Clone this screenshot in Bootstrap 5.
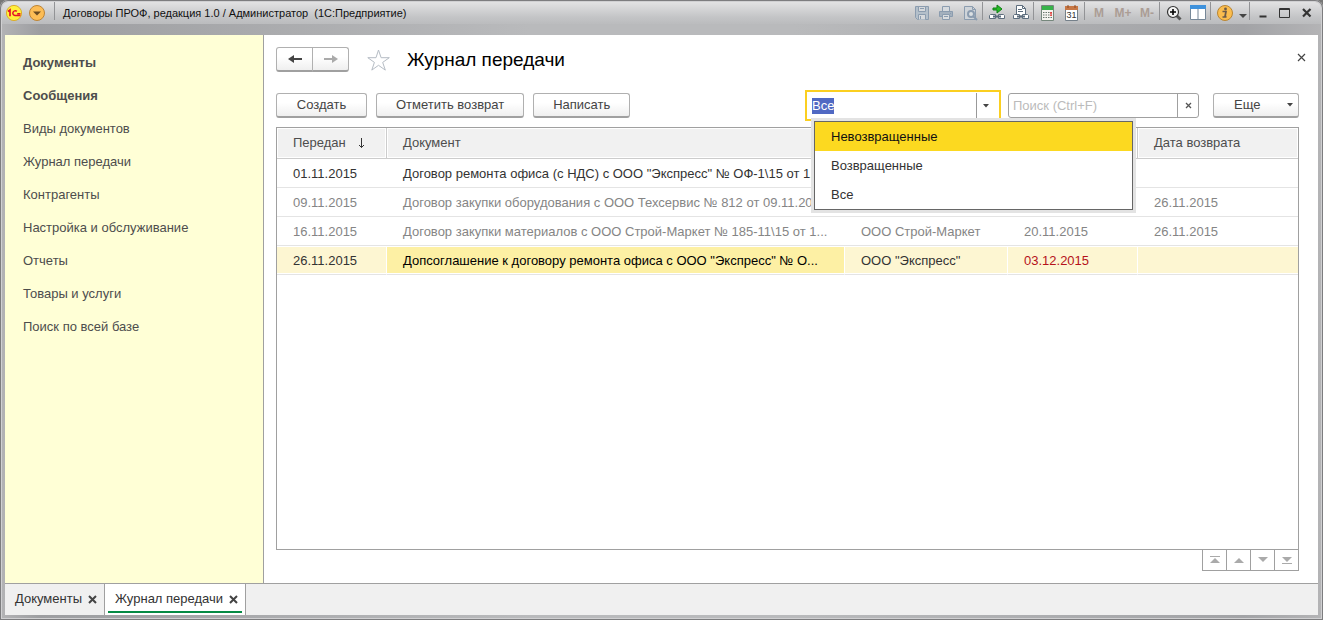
<!DOCTYPE html>
<html lang="ru">
<head>
<meta charset="utf-8">
<meta name="viewport" content="width=device-width, initial-scale=1">
<title>Договоры ПРОФ, редакция 1.0</title>
<link href="https://cdn.jsdelivr.net/npm/bootstrap@5.3.0/dist/css/bootstrap.min.css" rel="stylesheet">
<style>
  body { font-family: "Liberation Sans", Arial, sans-serif; font-size: 13px; line-height: 16px; color: #333; background: #777; }
  button { font: inherit; color: inherit; }
  a { color: inherit; text-decoration: none; }
  .app-window { min-height: 100vh; padding: 0 5px 5px; border-radius: 8px 8px 0 0; background: linear-gradient(90deg, #b4b4b6, #9d9ea1 3%, #b9babc 40%, #b9babc 60%, #a2a3a6 94%, #b4b4b6); box-shadow: inset 0 0 0 1px #7d7d7f, inset 0 0 0 2px #d0d0d2; }
  .title-bar { height: 22px; margin: 2px -3px 0; padding: 0 3px 0 4px; border-radius: 6px 6px 0 0; background: linear-gradient(#e2e2e3, #c3c4c6 70%, #bbbcbe); }
  .title-gap { height: 11px; }
  .title-text { font-size: 11px; color: #111; white-space: pre; margin-left: 6px; }
  .tool { width: 24px; height: 22px; padding: 0; border: 0; background: none; display: flex; align-items: center; justify-content: center; flex: none; }
  .tool-win { width: 22px; }
  .tool-caret { width: 12px; }
  .tool-mem { font-weight: 700; font-size: 12px; color: #ab9d95; }
  .tool-sep { width: 3px; height: 18px; border-left: 1px solid #929396; flex: none; margin-bottom: 4px; }
  .side { width: 259px; background: #ffffd6; border-right: 1px solid #a0a0a0; padding: 11px 18px; flex: none; }
  .side a { height: 33px; line-height: 33px; color: #4d4d4d; }
  .work { background: #fff; padding: 12px 19px 12px 12px; min-width: 0; }
  .form-close { margin-right: -7px; }
  .btn-app { --bs-btn-font-size: 13px; --bs-btn-line-height: 16px; --bs-btn-padding-y: 3px; --bs-btn-padding-x: 19px; --bs-btn-color: #444; --bs-btn-border-radius: 3px; --bs-btn-border-color: #b0b0b0; --bs-btn-hover-color: #222; --bs-btn-hover-border-color: #999; height: 25px; border-bottom: 2px solid #a0a0a0; background: linear-gradient(#fff 40%, #efefef); }
  .btn-app.btn-nav { width: 37px; padding: 0; display: flex; align-items: center; justify-content: center; }
  .page-title { font-size: 19px; line-height: 24px; color: #000; margin: 0; font-weight: 400; }
  .commands { margin-top: 18px; }
  .actions { gap: 9px; }
  .actions .btn-app { min-width: 91px; }
  .filter { width: 196px; height: 31px; border: 2px solid #fbcf20; padding: 1px 0; background: #fff; position: relative; }
  .filter input { width: 169px; border: 0; outline: 0; padding: 0 5px; color: #333; }
  .filter input::selection { background: #5069c3; color: #fff; }
  .filter-toggle { width: 23px; padding: 0 4px 0 0; border: 0; border-left: 1px solid #999; background: none; height: 25px; }
  .filter-menu { left: 7px; top: 29px; width: 319px; min-width: 0; padding: 0; margin: 0; border: 1px solid #666; border-radius: 0; box-shadow: 0 0 0 3px #e3e3e3; font-size: 13px; z-index: 10; }
  .filter-menu .dropdown-item { height: 29px; line-height: 29px; padding: 0 16px; color: #333; }
  .filter-menu .dropdown-item.active { background: #fcd920; color: #111; }
  .search { width: 191px; height: 25px; border: 1px solid #a0a0a0; border-radius: 3px; margin-left: 7px; }
  .search input { width: 168px; border: 0; outline: 0; padding: 0 4px; background: none; }
  .search input::placeholder { color: #bbb; opacity: 1; }
  .search button { width: 21px; border: 0; border-left: 1px solid #a0a0a0; background: none; padding: 0; }
  .more { width: 86px; margin-left: 14px; padding: 0 5px 0 20px; }
  .grid-frame { border: 1px solid #a0a0a0; margin-top: 6px; }
  .journal { table-layout: fixed; width: 100%; border-collapse: separate; border-spacing: 0; }
  .journal th, .journal td { padding: 0 16px; overflow: hidden; text-overflow: ellipsis; white-space: nowrap; }
  .journal th { height: 31px; font-weight: 400; color: #4d4d4d; background: #f1f1f1; border-right: 1px solid #ccc; border-bottom: 1px solid #ccc; box-shadow: inset 0 0 0 1px #fff; }
  .journal th:last-child { border-right: 0; }
  .journal td { height: 29px; padding-top: 2px; border-bottom: 1px solid #e4e4e4; }
  .journal td.cell-doc { padding-right: 14px; }
  .journal .returned td { color: #858585; }
  .journal .current td { background: #fdf6d2; border-right: 1px solid #fff; box-shadow: inset 0 1px #fff, inset 0 -1px #fff; }
  .journal .current td.cell-doc { background: #fdf0a4; color: #000; }
  .journal .current td:last-child { border-right: 0; }
  .journal .current td.overdue { color: #b5121b; }
  .sort-mark { overflow: visible; }
  .col-date { width: 110px; } .col-org { width: 163px; } .col-due { width: 130px; } .col-back { width: 160px; }
  .pager { border: 1px solid #a0a0a0; border-top: 0; }
  .pager button { width: 24px; height: 20px; padding: 0; border: 0; border-left: 1px solid #a0a0a0; background: #fff; display: flex; align-items: center; justify-content: center; }
  .pager button:first-child { border-left: 0; width: 23px; }
  .tabs-bar { height: 32px; background: #f0f0f0; border-top: 1px solid #a0a0a0; }
  .tab { border-right: 1px solid #a0a0a0; padding: 0 3px; }
  .tab-body { border-bottom: 2px solid transparent; padding: 3px 4px 0 7px; height: 29px; gap: 6px; }
  .tab.on { background: #fff; }
  .tab.on .tab-body { border-bottom-color: #058a44; }
  .plain { border: 0; background: none; padding: 0; display: flex; align-items: center; }
</style>
</head>
<body>
<div class="app-window d-flex flex-column">
  <header class="title-bar d-flex align-items-center">
    <svg width="18" height="18" viewBox="0 0 18 18" class="me-1 flex-shrink-0" role="img" aria-label="1С"><circle cx="8" cy="9" r="7.600" fill="#fff03c" stroke="#dcae2b"/><path d="M2 7.500 4 6v6.200" fill="none" stroke="#e3122a" stroke-width="1.700"/><path d="M10.800 7.400a2.400 2.400 0 1 0-1.800 4.200h5.500M11.200 9.800h3.300" fill="none" stroke="#e3122a" stroke-width="1.500"/></svg>
    <button class="plain flex-shrink-0" aria-label="Главное меню"><svg width="18" height="18" viewBox="0 0 18 18"><circle cx="9" cy="9" r="7.500" fill="#fcbd56" stroke="#bd8435"/><path d="M5 7.500h8l-4 4z" fill="#6a4b22"/></svg></button>
    <span class="tool-sep ms-2"></span>
    <span class="title-text flex-grow-1">Договоры ПРОФ, редакция 1.0 / Администратор  (1С:Предприятие)</span>
    <button class="tool" aria-label="Сохранить"><svg width="16" height="16" fill="none" stroke="#8b9caf"><path d="M1.500 1.500h13v13h-11l-2-2z" fill="#b3bfca"/><path d="M4.500 1.500h7v5h-7zM4.500 14.500v-5h7v5" fill="#d6d9dc"/><path d="M6.500 11v3M6 3.500h4"/></svg></button>
    <button class="tool" aria-label="Печать"><svg width="16" height="16" fill="none" stroke="#8b9caf"><path d="M4.500 6V1.500h7V6" fill="#d6dade"/><path d="M1.500 6.500h13v5h-13z" fill="#a3b0bd"/><path d="M4.500 9.500h7v5h-7z" fill="#dadddf"/><path d="M6 11.500h4M12 8.500h1"/></svg></button>
    <button class="tool" aria-label="Просмотр"><svg width="16" height="16" fill="none" stroke="#8b9caf"><path d="M2.500 1.500h8l3 3v10h-11z" fill="#cfd4d9"/><path d="M10.500 1.500v3h3"/><circle cx="9" cy="9" r="3" fill="#dce0e3" stroke-width="2"/><path d="m11 11 4 4" stroke-width="2"/></svg></button>
    <span class="tool-sep"></span>
    <button class="tool" aria-label="Получить ссылку"><svg width="18" height="18" fill="none"><path d="M5 4h4V1l5 4-5 4V6H5z" fill="#25bd25" stroke="#117f18"/><path d="M2.500 10.500h5v4h-6v-3zM10.500 10.500h5l1 1v3h-6z" fill="#fff" stroke="#5d6d7d"/><path d="M5 12.500h8" stroke="#5d6d7d" stroke-width="2"/></svg></button>
    <button class="tool" aria-label="Перейти по ссылке"><svg width="18" height="18" fill="none" stroke="#5d6d7d"><path d="M4.500 11V1.500h6l3 3V11" fill="#fff"/><path d="M10.500 1.500v3h3M6 5.500h4M6 7.500h5"/><path d="M2.500 10.500h5v4h-6v-3zM10.500 10.500h5l1 1v3h-6z" fill="#fff"/><path d="M5 12.500h8" stroke-width="2"/></svg></button>
    <span class="tool-sep"></span>
    <button class="tool" aria-label="Калькулятор"><svg width="14" height="16"><path d="M.5.500h12v15H.500z" fill="#f4f4f0" stroke="#75877c"/><path d="M1 1h11v4H1z" fill="#37b34a"/><path d="M2 7.500h9M2 10h9M2 12.500h9" stroke="#68766e" stroke-dasharray="1.500 1"/><path d="M10 7v2M10 9.500v1.500" stroke="#e33" stroke-width="1.500"/></svg></button>
    <button class="tool" aria-label="Календарь"><svg width="14" height="16"><path d="M.5 2.500h12v13H.500z" fill="#fff" stroke="#75808a"/><path d="M0 1h13v4H0z" fill="#c77745"/><path d="M3 0v3M10 0v3" stroke="#8a4a25"/><text x="6.500" y="13" font-size="9" text-anchor="middle" fill="#333">31</text></svg></button>
    <span class="tool-sep"></span>
    <button class="tool tool-mem">M</button>
    <button class="tool tool-mem">M+</button>
    <button class="tool tool-mem">M-</button>
    <span class="tool-sep"></span>
    <button class="tool" aria-label="Масштаб"><svg width="16" height="16" fill="none" stroke="#333"><path d="m10.500 10.500 4 4" stroke="#555" stroke-width="3"/><circle cx="7" cy="7" r="5.500" fill="#f3f3f3" stroke-width="1.200"/><path d="M4 7h6M7 4v6" stroke="#000" stroke-width="1.600"/></svg></button>
    <button class="tool" aria-label="Панели"><svg width="16" height="16"><path d="M.5.500h15v14H.500z" fill="#fff" stroke="#768797"/><path d="M0 0h16v4H0z" fill="#3f92dc"/><path d="M8 4v11" stroke="#768797"/></svg></button>
    <span class="tool-sep"></span>
    <button class="tool" aria-label="Справка"><svg width="18" height="18"><circle cx="9" cy="9" r="7.500" fill="#fbbd4e" stroke="#b98532"/><circle cx="9.500" cy="5" r="1.400" fill="#6b5a49"/><path d="M6.500 7.500H10L9 12.500h1.500M6.500 13h4" fill="none" stroke="#6b5a49" stroke-width="1.700"/></svg></button>
    <button class="tool tool-caret" aria-label="Ещё"><svg width="8" height="12"><path d="M0 7h8l-4 4z" fill="#444"/></svg></button>
    <span class="tool-sep"></span>
    <button class="tool tool-win" aria-label="Свернуть"><svg width="12" height="12"><path d="M2.500 9.500h7" stroke="#333" stroke-width="2"/></svg></button>
    <button class="tool tool-win" aria-label="Развернуть"><svg width="12" height="12"><path d="M.5 1.500h10v9H.500zM0 2.500h11" fill="none" stroke="#333"/></svg></button>
    <button class="tool tool-win" aria-label="Закрыть"><svg width="12" height="12"><path d="m2 2 7.500 7.500m0-7.500L2 9.500" stroke="#333" stroke-width="2.200"/></svg></button>
  </header>
  <div class="title-gap"></div>

  <div class="d-flex flex-grow-1">
    <nav class="side d-flex flex-column">
      <a href="#" class="fw-bold">Документы</a>
      <a href="#" class="fw-bold">Сообщения</a>
      <a href="#">Виды документов</a>
      <a href="#">Журнал передачи</a>
      <a href="#">Контрагенты</a>
      <a href="#">Настройка и обслуживание</a>
      <a href="#">Отчеты</a>
      <a href="#">Товары и услуги</a>
      <a href="#">Поиск по всей базе</a>
    </nav>

    <main class="work flex-grow-1 d-flex flex-column">
      <div class="d-flex align-items-center">
        <div class="btn-group">
          <button class="btn btn-app btn-nav" aria-label="Назад"><svg width="14" height="10"><path d="M0 5 6 1v3h8v2H6v3z" fill="#444"/></svg></button>
          <button class="btn btn-app btn-nav" aria-label="Вперед"><svg width="14" height="10"><path d="M14 5 8 1v3H0v2h8v3z" fill="#aaa"/></svg></button>
        </div>
        <button class="plain ms-3" aria-label="В избранное"><svg width="26" height="24" viewBox="0 0 26 24"><path d="m13.500 2 2.600 7.700h8.200l-6.600 4.700 2.600 7.700-6.800-4.800-6.700 4.800 2.600-7.700-6.600-4.700H11z" fill="#fff" stroke="#b5bcc4"/></svg></button>
        <h1 class="page-title ms-3 flex-grow-1">Журнал передачи</h1>
        <button class="plain form-close" aria-label="Закрыть"><svg width="9" height="14"><path d="m1 1 7 7m0-7L1 8" stroke="#444" stroke-width="1.200"/></svg></button>
      </div>

      <div class="commands d-flex align-items-center">
        <div class="actions d-flex">
          <button class="btn btn-app">Создать</button>
          <button class="btn btn-app">Отметить возврат</button>
          <button class="btn btn-app">Написать</button>
        </div>
        <div class="filter d-flex ms-auto">
          <input id="state" type="text" value="Все" role="combobox" aria-label="Состояние" aria-expanded="true">
          <button class="filter-toggle" aria-label="Показать список"><svg width="6" height="4" class="d-block mx-auto"><path d="M0 0h6L3 3.500z" fill="#444"/></svg></button>
          <div class="dropdown-menu show filter-menu">
            <a class="dropdown-item active" href="#">Невозвращенные</a>
            <a class="dropdown-item" href="#">Возвращенные</a>
            <a class="dropdown-item" href="#">Все</a>
          </div>
        </div>
        <div class="search d-flex">
          <input type="text" placeholder="Поиск (Ctrl+F)" aria-label="Поиск">
          <button aria-label="Очистить"><svg width="7" height="7" class="d-block mx-auto"><path d="m1 1 5 5m0-5L1 6" stroke="#555" stroke-width="1.300"/></svg></button>
        </div>
        <button class="btn btn-app more d-flex align-items-center"><span class="flex-grow-1 text-start">Еще</span><svg width="6" height="4"><path d="M0 0h6L3 3.500z" fill="#444"/></svg></button>
      </div>

      <div class="grid-frame flex-grow-1">
        <table class="journal">
          <colgroup><col class="col-date"><col><col class="col-org"><col class="col-due"><col class="col-back"></colgroup>
          <thead>
            <tr><th>Передан<svg width="8" height="12" class="ms-2 sort-mark"><path d="M7.500 0v9.500M5 7l2.500 2.500L10 7" fill="none" stroke="#333"/></svg></th><th>Документ</th><th></th><th></th><th>Дата возврата</th></tr>
          </thead>
          <tbody>
            <tr><td>01.11.2015</td><td class="cell-doc">Договор ремонта офиса (с НДС) с ООО "Экспресс" № ОФ-1\15 от 1...</td><td></td><td></td><td></td></tr>
            <tr class="returned"><td>09.11.2015</td><td class="cell-doc">Договор закупки оборудования с ООО Техсервис № 812 от 09.11.20...</td><td></td><td></td><td>26.11.2015</td></tr>
            <tr class="returned"><td>16.11.2015</td><td class="cell-doc">Договор закупки материалов с ООО Строй-Маркет № 185-11\15 от 1...</td><td>ООО Строй-Маркет</td><td>20.11.2015</td><td>26.11.2015</td></tr>
            <tr class="current"><td>26.11.2015</td><td class="cell-doc">Допсоглашение к договору ремонта офиса с ООО "Экспресс" № О...</td><td>ООО "Экспресс"</td><td class="overdue">03.12.2015</td><td></td></tr>
          </tbody>
        </table>
      </div>
      <div class="pager d-flex align-self-end">
        <button aria-label="В начало"><svg width="10" height="8"><path d="M0 .500h10" stroke="#aaa"/><path d="m0 7 5-5 5 5z" fill="#aaa"/></svg></button>
        <button aria-label="Вверх"><svg width="10" height="6"><path d="m0 6 5-5 5 5z" fill="#aaa"/></svg></button>
        <button aria-label="Вниз"><svg width="10" height="6"><path d="m0 0 5 5 5-5z" fill="#aaa"/></svg></button>
        <button aria-label="В конец"><svg width="10" height="8"><path d="M0 7.500h10" stroke="#aaa"/><path d="m0 1 5 5 5-5z" fill="#aaa"/></svg></button>
      </div>
    </main>
  </div>

  <footer class="tabs-bar d-flex">
    <div class="tab"><div class="tab-body d-flex align-items-center"><a href="#">Документы</a><button class="plain" aria-label="Закрыть вкладку"><svg width="9" height="9"><path d="m1 1 7 7m0-7L1 8" stroke="#444" stroke-width="2"/></svg></button></div></div>
    <div class="tab on"><div class="tab-body d-flex align-items-center"><a href="#">Журнал передачи</a><button class="plain" aria-label="Закрыть вкладку"><svg width="9" height="9"><path d="m1 1 7 7m0-7L1 8" stroke="#444" stroke-width="2"/></svg></button></div></div>
  </footer>
</div>
<script src="https://cdn.jsdelivr.net/npm/bootstrap@5.3.0/dist/js/bootstrap.bundle.min.js"></script>
<script>
  const state = document.getElementById('state');
  state.focus();
  state.select();
</script>
</body>
</html>
